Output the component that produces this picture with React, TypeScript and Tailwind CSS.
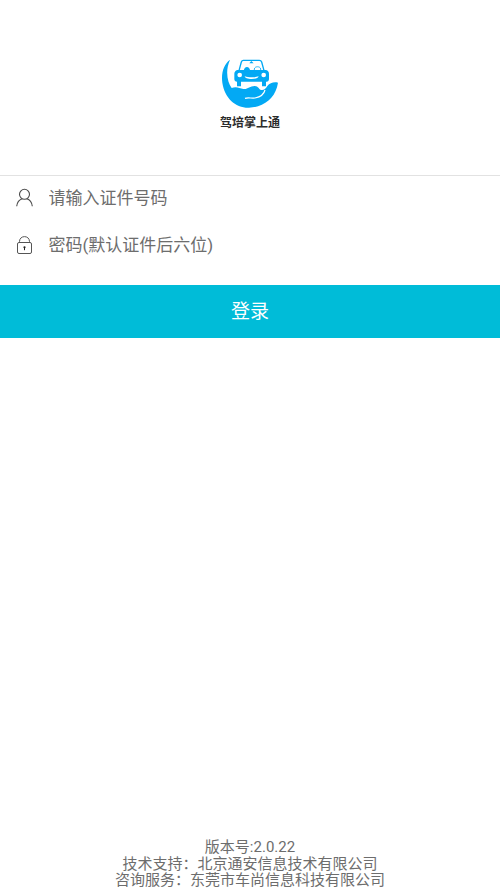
import React from 'react';

function Logo() {
  return (
    <svg className="h-[51px] w-[60px]" viewBox="30 24 180 153" fill="none">
      <path
        d="M60 29C41 43 33 69 37 98C44 144 76 174 117 173C158 172 190 149 201 112L204 98C191 95 180 99 172 108C167 117 161 121 154 120C146 119 146 108 134 108C119 108 113 119 100 117C88 114 78 108 65 114C52 97 45 63 60 29Z"
        fill="#03a9f4"
      />
      <path d="M105 145C116 141 124 146 135 144C150 141 162 133 165 120" stroke="white" strokeWidth="3.5" />
      <path d="M81 92h12v17H81zM156 92h12v17h-12z" fill="#03a9f4" />
      <path
        d="M82 60h86c6 2 9 6 9 12v15c0 5-3 8-7 8H81c-5 0-8-3-8-8V72c0-6 3-10 9-12Z"
        fill="#03a9f4"
      />
      <path
        d="M87 62L94 36C95 33 97 31 100 31H148C152 31 154 33 155 36L162 62Z"
        fill="white"
        stroke="#03a9f4"
        strokeWidth="4"
      />
      <path d="M118 40l6-7 7 7Z" fill="#03a9f4" />
      <path d="M101 64C102 54 106 51 111 51S119 54 121 64Z" fill="#03a9f4" />
      <path d="M133 62V57C134 48 151 48 152 57V62" stroke="#03a9f4" strokeWidth="2.5" />
      <circle cx="89" cy="75" r="7" fill="white" />
      <circle cx="161" cy="75" r="7" fill="white" />
      <path d="M104 79C116 83 134 83 146 79C144 85 138 87 125 87S106 85 104 79Z" fill="white" />
    </svg>
  );
}

function UserIcon() {
  return (
    <svg className="h-5 w-5" viewBox="0 0 20 20" fill="none" stroke="#4a4a4a" strokeWidth="1.1">
      <circle cx="9.5" cy="6.3" r="5" />
      <path d="M1.7 18.3C2.2 14 4.5 11.7 7.2 10.8M11.8 10.8C14.8 11.7 16.8 14 17.3 18.3" />
    </svg>
  );
}

function LockIcon() {
  return (
    <svg className="h-5 w-5" viewBox="0 0 20 20" fill="none" stroke="#555" strokeWidth="1">
      <rect x="2.5" y="7.5" width="14" height="11" rx="1.5" />
      <path d="M4.5 7.5V6.5C4.5 0 14.5 0 14.5 6.5V7.5" />
      <circle cx="9.5" cy="12.3" r="1.1" fill="#222" stroke="none" />
      <path d="M9.5 12v3.2" stroke="#222" />
    </svg>
  );
}

interface FieldProps {
  icon: React.ReactNode;
  type: string;
  placeholder: string;
}

function Field({ icon, type, placeholder }: FieldProps) {
  return (
    <label className="flex h-[47px] items-center pl-[15px]">
      {icon}
      <input
        type={type}
        placeholder={placeholder}
        className="ml-[13.5px] h-6 flex-1 text-[17px] leading-6 text-[#6d6d6d] outline-none placeholder:text-[#6d6d6d]"
      />
    </label>
  );
}

export default function App() {
  return (
    <div className="flex h-screen flex-col overflow-hidden bg-white font-[Roboto,'Noto_Sans_CJK_SC',sans-serif]">
      <header className="flex h-44 flex-col items-center border-b border-[#e2e2e2] pt-[58px]">
        <Logo />
        <h1 className="mt-[5px] text-xs leading-[18px] font-bold text-[#2b2b2b]">驾培掌上通</h1>
      </header>

      <form className="flex flex-col" onSubmit={(e) => e.preventDefault()}>
        <div className="-mt-0.5 h-[111px]">
          <Field icon={<UserIcon />} type="text" placeholder="请输入证件号码" />
          <Field icon={<LockIcon />} type="password" placeholder="密码(默认证件后六位)" />
        </div>
        <button type="submit" className="h-[53px] bg-[#00bcd8] pt-0.5 text-[19px] text-white">
          登录
        </button>
      </form>

      <footer className="mt-auto text-center text-[15px] leading-[17px] text-[#6d6d6d]">
        <p>版本号:2.0.22</p>
        <p>技术支持：北京通安信息技术有限公司</p>
        <p className="leading-[15px]">咨询服务：东莞市车尚信息科技有限公司</p>
      </footer>
    </div>
  );
}
